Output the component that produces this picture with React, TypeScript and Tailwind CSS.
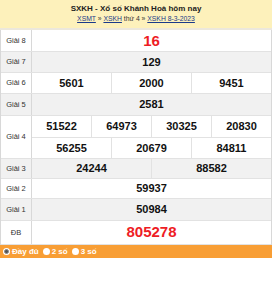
import React from 'react';

type Row = {
  label: string;
  lines: string[][];
  gray?: boolean;
  red?: boolean;
  h: string;
};

const ROWS: Row[] = [
  { label: 'Giải 8', lines: [['16']], red: true, h: 'h-[22px]' },
  { label: 'Giải 7', lines: [['129']], gray: true, h: 'h-[21px]' },
  { label: 'Giải 6', lines: [['5601', '2000', '9451']], h: 'h-[21px]' },
  { label: 'Giải 5', lines: [['2581']], gray: true, h: 'h-[22px]' },
  {
    label: 'Giải 4',
    lines: [
      ['51522', '64973', '30325', '20830'],
      ['56255', '20679', '84811'],
    ],
    h: 'h-[43px]',
  },
  { label: 'Giải 3', lines: [['24244', '88582']], gray: true, h: 'h-[20px]' },
  { label: 'Giải 2', lines: [['59937']], h: 'h-[20px]' },
  { label: 'Giải 1', lines: [['50984']], gray: true, h: 'h-[22px]' },
  { label: 'ĐB', lines: [['805278']], red: true, h: 'h-[24px]' },
];

function PrizeRow({ row }: { row: Row }) {
  return (
    <div className={`flex border-b border-[#e2e2e2] ${row.h} ${row.gray ? 'bg-[#f1f1f1]' : 'bg-white'}`}>
      <div className="w-[31px] shrink-0 flex items-center justify-center border-r border-[#d8d8d8] text-[7.5px] text-[#333]">
        {row.label}
      </div>
      <div className="flex-1 flex flex-col">
        {row.lines.map((nums, i) => (
          <div
            key={i}
            className={`flex-1 flex ${i < row.lines.length - 1 ? 'border-b border-[#e2e2e2]' : ''}`}
          >
            {nums.map((n, j) => (
              <div
                key={j}
                className={`flex-1 flex items-center justify-center font-bold ${
                  j < nums.length - 1 ? 'border-r border-[#e2e2e2]' : ''
                } ${row.red ? 'text-[#ee1c25] text-[15px]' : 'text-[#111] text-[11px]'}`}
              >
                {n}
              </div>
            ))}
          </div>
        ))}
      </div>
    </div>
  );
}

function Radio({ label, checked }: { label: string; checked?: boolean }) {
  return (
    <label className="flex items-center gap-[2px]">
      <span className="w-[7px] h-[7px] rounded-full bg-white flex items-center justify-center">
        {checked && <span className="w-[5px] h-[5px] rounded-full bg-[#555] border border-[#888]" />}
      </span>
      <span>{label}</span>
    </label>
  );
}

export default function App() {
  return (
    <div className="w-[272px] bg-white font-['Liberation_Sans',Arial,sans-serif]">
      <div className="h-[30px] bg-[#fdf1bb] flex flex-col items-center justify-center leading-none border-b-2 border-[#ece8dc]">
        <div className="font-bold text-[8px] text-[#222]">SXKH - Xổ số Khánh Hoà hôm nay</div>
        <div className="text-[6.8px] text-[#333] mt-[3px]">
          <a className="underline text-[#1a3a8a]">XSMT</a> » <a className="underline text-[#1a3a8a]">XSKH</a> thứ 4 »{' '}
          <a className="underline text-[#1a3a8a]">XSKH 8-3-2023</a>
        </div>
      </div>
      <div className="border-l border-r border-[#d8d8d8]">
        {ROWS.map((r) => (
          <PrizeRow key={r.label} row={r} />
        ))}
      </div>
      <div className="h-[13px] bg-[#f89e35] flex items-center gap-[4px] pl-[3px] text-white font-bold text-[8px]">
        <Radio label="Đầy đủ" checked />
        <Radio label="2 số" />
        <Radio label="3 số" />
      </div>
    </div>
  );
}
